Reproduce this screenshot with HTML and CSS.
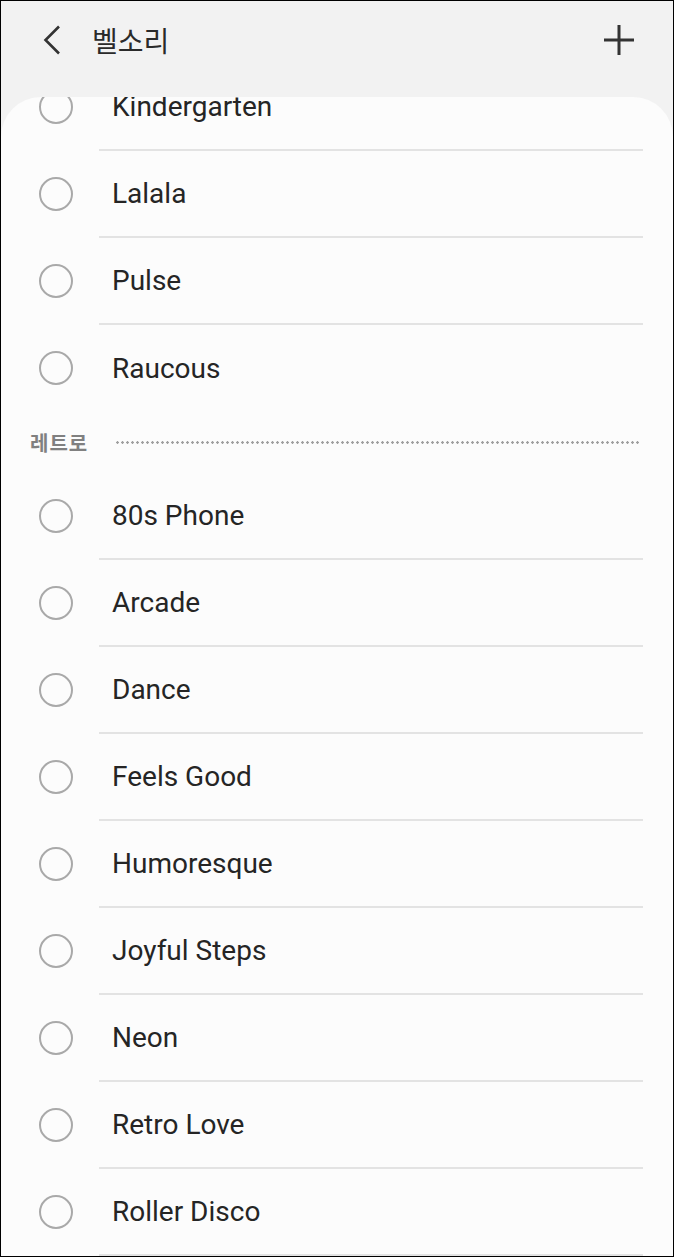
FILE: index.html
```html
<!DOCTYPE html>
<html lang="ko">
<head>
    <meta charset="UTF-8">
    <title>벨소리</title>
    <link rel="stylesheet" href="styles.css">
</head>
<body>
    <div class="screen">
        <div class="topbar">
            <span class="back">
                <svg width="20" height="30" viewBox="0 0 20 30"><path d="M17 1.5 L3.5 15 L17 28.5" fill="none" stroke="#333" stroke-width="2.6"/></svg>
            </span>
            <h1 class="title">벨소리</h1>
            <span class="add">
                <svg width="32" height="32" viewBox="0 0 32 32"><path d="M16 1 V31 M1 16 H31" fill="none" stroke="#333" stroke-width="3"/></svg>
            </span>
        </div>
        <div class="card">
            <ul class="list">
                <li class="row"><span class="radio"></span><span class="label">Kindergarten</span></li>
                <li class="row"><span class="radio"></span><span class="label">Lalala</span></li>
                <li class="row"><span class="radio"></span><span class="label">Pulse</span></li>
                <li class="row last"><span class="radio"></span><span class="label">Raucous</span></li>
                <li class="group"><span class="group-name">레트로</span><span class="dots"></span></li>
                <li class="row"><span class="radio"></span><span class="label">80s Phone</span></li>
                <li class="row"><span class="radio"></span><span class="label">Arcade</span></li>
                <li class="row"><span class="radio"></span><span class="label">Dance</span></li>
                <li class="row"><span class="radio"></span><span class="label">Feels Good</span></li>
                <li class="row"><span class="radio"></span><span class="label">Humoresque</span></li>
                <li class="row"><span class="radio"></span><span class="label">Joyful Steps</span></li>
                <li class="row"><span class="radio"></span><span class="label">Neon</span></li>
                <li class="row"><span class="radio"></span><span class="label">Retro Love</span></li>
                <li class="row"><span class="radio"></span><span class="label">Roller Disco</span></li>
            </ul>
        </div>
    </div>
</body>
</html>
```

FILE: styles.css
```css
*{
    margin: 0;
    padding: 0;
    box-sizing: border-box;
}
html, body{
    width: 674px;
    height: 1257px;
    overflow: hidden;
    background: #f2f2f2;
}
body{
    font-family: "Roboto", "Noto Sans CJK KR", sans-serif;
    color: #252525;
}
.screen{
    width: 674px;
    height: 1257px;
    border: solid 1px #000000;
    background: #f2f2f2;
    display: flex;
    flex-direction: column;
    overflow: hidden;
}
.topbar{
    height: 96px;
    flex-shrink: 0;
    display: flex;
    align-items: center;
    padding-bottom: 18px;
}
.back{
    width: 20px;
    height: 30px;
    margin-left: 41px;
    display: flex;
}
.title{
    margin-left: 30px;
    font-family: "Noto Sans CJK KR", sans-serif;
    font-size: 28px;
    font-weight: 400;
    color: #2a2a2a;
    flex: 1;
}
.add{
    width: 32px;
    height: 32px;
    margin-right: 38px;
    display: flex;
}
.card{
    flex: 1;
    background: #fcfcfc;
    border-radius: 40px 40px 0 0;
    overflow: hidden;
}
.list{
    list-style: none;
    margin-top: -33px;
}
.row{
    height: 87px;
    display: flex;
    align-items: center;
}
.radio{
    width: 34px;
    height: 34px;
    margin-left: 38px;
    margin-top: -2px;
    border: solid 2px #a9a9a9;
    border-radius: 50%;
    flex-shrink: 0;
}
.label{
    flex: 1;
    height: 87px;
    margin-left: 26px;
    margin-right: 30px;
    padding-left: 13px;
    display: flex;
    align-items: center;
    font-size: 28px;
    border-bottom: solid 2px #e3e3e3;
}
.row.last .label{
    border-bottom: none;
}
.group{
    height: 61px;
    display: flex;
    align-items: center;
}
.group-name{
    margin-left: 29px;
    font-family: "Noto Sans CJK KR", sans-serif;
    font-size: 20px;
    font-weight: 700;
    letter-spacing: 1px;
    color: #808080;
}
.dots{
    flex: 1;
    height: 3px;
    margin-left: 27px;
    margin-right: 32px;
    background-image: radial-gradient(circle, #a0a0a0 1.1px, transparent 1.5px);
    background-size: 5px 3px;
}
```
